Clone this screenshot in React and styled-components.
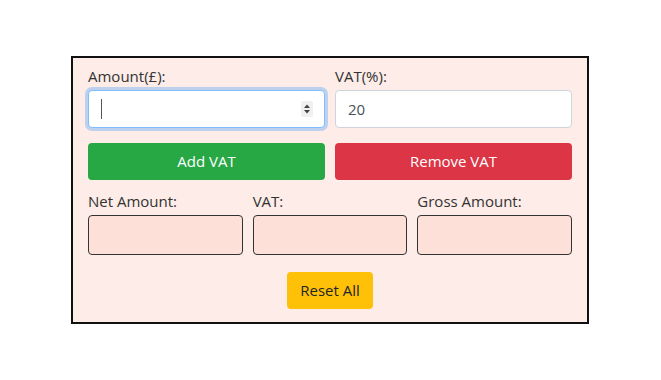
import React, { useState } from 'react';
import styled, { createGlobalStyle, css } from 'styled-components';

const GlobalStyle = createGlobalStyle`
  html, body {
    margin: 0;
    padding: 0;
    background: #fff;
  }
  body {
    min-height: 100vh;
    display: flex;
    align-items: center;
    justify-content: center;
    font-family: "Open Sans", "Noto Sans", sans-serif;
    color: #212529;
  }
`

const Calculator = styled.div`
  width: 484px;
  padding: 6px 15px 13px;
  margin: 0 1px 1px 0;
  background: #fdece7;
  border: 2px solid #111;
`

const Row = styled.div`
  display: grid;
  grid-template-columns: repeat(${props => props.cols}, 1fr);
  column-gap: 10px;
  margin-bottom: ${props => props.gap}px;
`

const Field = styled.div`
  display: flex;
  flex-direction: column;
`

const Label = styled.label`
  font-size: 15px;
  line-height: 24px;
  color: #333;
  margin-bottom: 2px;
`

const InputWrap = styled.div`
  position: relative;
`

const Input = styled.input`
  box-sizing: border-box;
  width: 100%;
  height: 38px;
  padding: 6px 12px;
  font-family: inherit;
  font-size: 15px;
  color: #495057;
  background: #fff;
  border: 1px solid #ced4da;
  border-radius: 4px;
  outline: none;
  ${props => props.$focused && css`
    border-color: #80bdff;
    box-shadow: 0 0 0 3px rgba(0, 123, 255, 0.25);
  `}
`

const Caret = styled.span`
  position: absolute;
  left: 13px;
  top: 9px;
  width: 1px;
  height: 20px;
  background: #555;
`

const Spinner = styled.span`
  position: absolute;
  right: 12px;
  top: 11px;
  width: 12px;
  height: 16px;
  background: #f0f0f0;
  border-radius: 2px;
  display: flex;
  align-items: center;
  justify-content: center;
`

const Button = styled.button`
  height: 37px;
  border: none;
  border-radius: 4px;
  font-family: inherit;
  font-size: 15px;
  color: ${props => props.$dark ? '#212529' : '#fff'};
  background: ${props => props.$bg};
  cursor: pointer;
`

const Output = styled.div`
  box-sizing: border-box;
  height: 40px;
  background: #fde0d8;
  border: 1px solid #333;
  border-radius: 4px;
`

const Footer = styled.div`
  display: flex;
  justify-content: center;
`

const ResetButton = styled(Button)`
  width: 86px;
`

function App() {
  const [vat] = useState('20');

  return (
    <>
      <GlobalStyle />
      <Calculator>
        <Row cols={2} gap={15}>
          <Field>
            <Label>Amount(£):</Label>
            <InputWrap>
              <Input type="text" $focused defaultValue="" />
              <Caret />
              <Spinner>
                <svg width="8" height="12" viewBox="0 0 8 12">
                  <path d="M4 1.5 L7 5 H1 Z" fill="#444" />
                  <path d="M4 10.5 L7 7 H1 Z" fill="#444" />
                </svg>
              </Spinner>
            </InputWrap>
          </Field>
          <Field>
            <Label>VAT(%):</Label>
            <Input type="text" defaultValue={vat} />
          </Field>
        </Row>
        <Row cols={2} gap={9}>
          <Button $bg="#28a745">Add VAT</Button>
          <Button $bg="#dc3545">Remove VAT</Button>
        </Row>
        <Row cols={3} gap={17}>
          <Field>
            <Label>Net Amount:</Label>
            <Output />
          </Field>
          <Field>
            <Label>VAT:</Label>
            <Output />
          </Field>
          <Field>
            <Label>Gross Amount:</Label>
            <Output />
          </Field>
        </Row>
        <Footer>
          <ResetButton $bg="#ffc107" $dark>Reset All</ResetButton>
        </Footer>
      </Calculator>
    </>
  );
}

export default App;
